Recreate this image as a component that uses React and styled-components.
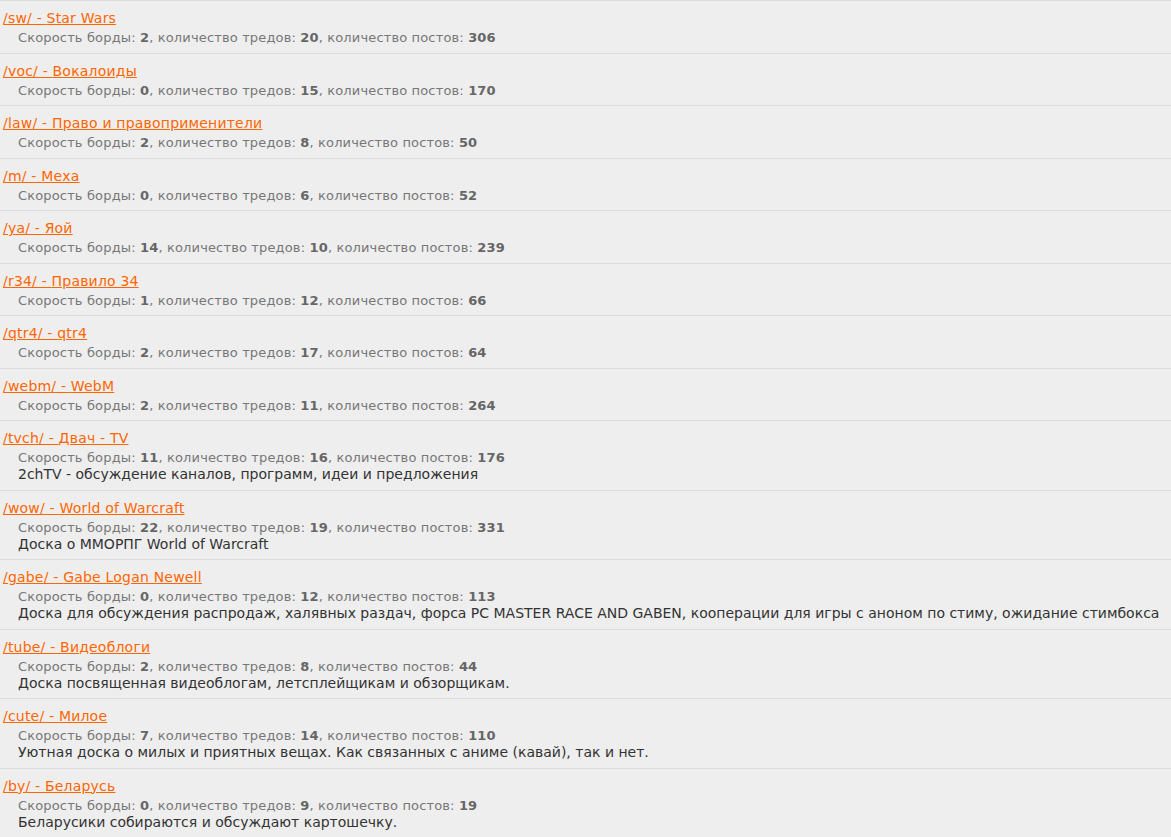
import styled, { createGlobalStyle } from "styled-components";

const GlobalStyle = createGlobalStyle`
  body {
    margin: 0;
    background: #eeeeee;
    font-family: "DejaVu Sans", Verdana, sans-serif;
  }
`;

const boards = [
  { id: "sw", name: "Star Wars", speed: 2, threads: 20, posts: 306 },
  { id: "voc", name: "Вокалоиды", speed: 0, threads: 15, posts: 170 },
  { id: "law", name: "Право и правоприменители", speed: 2, threads: 8, posts: 50 },
  { id: "m", name: "Меха", speed: 0, threads: 6, posts: 52 },
  { id: "ya", name: "Яой", speed: 14, threads: 10, posts: 239 },
  { id: "r34", name: "Правило 34", speed: 1, threads: 12, posts: 66 },
  { id: "qtr4", name: "qtr4", speed: 2, threads: 17, posts: 64 },
  { id: "webm", name: "WebM", speed: 2, threads: 11, posts: 264 },
  {
    id: "tvch",
    name: "Двач - TV",
    speed: 11,
    threads: 16,
    posts: 176,
    info: "2chTV - обсуждение каналов, программ, идеи и предложения",
  },
  {
    id: "wow",
    name: "World of Warcraft",
    speed: 22,
    threads: 19,
    posts: 331,
    info: "Доска о ММОРПГ World of Warcraft",
  },
  {
    id: "gabe",
    name: "Gabe Logan Newell",
    speed: 0,
    threads: 12,
    posts: 113,
    info: "Доска для обсуждения распродаж, халявных раздач, форса PC MASTER RACE AND GABEN, кооперации для игры с аноном по стиму, ожидание стимбокса",
  },
  {
    id: "tube",
    name: "Видеоблоги",
    speed: 2,
    threads: 8,
    posts: 44,
    info: "Доска посвященная видеоблогам, летсплейщикам и обзорщикам.",
  },
  {
    id: "cute",
    name: "Милое",
    speed: 7,
    threads: 14,
    posts: 110,
    info: "Уютная доска о милых и приятных вещах. Как связанных с аниме (кавай), так и нет.",
  },
  {
    id: "by",
    name: "Беларусь",
    speed: 0,
    threads: 9,
    posts: 19,
    info: "Беларусики собираются и обсуждают картошечку.",
  },
];

const List = styled.div`
  display: flex;
  flex-direction: column;
`;

const Row = styled.div`
  border-top: 1px solid #dcdcdc;
  padding: 9px 0 6.5px 3px;
  display: flex;
  flex-direction: column;
  align-items: flex-start;
`;

const Title = styled.a`
  color: #ff6600;
  font-size: 14px;
  line-height: 17px;
  text-decoration: underline;
  letter-spacing: 0.2px;
`;

const Stats = styled.div`
  margin: 3px 0 0 15px;
  color: #777777;
  font-size: 13px;
  line-height: 16px;
  letter-spacing: 0.15px;
`;

const Num = styled.b`
  color: #666666;
`;

const Info = styled.div`
  margin-left: 15px;
  color: #333333;
  font-size: 14px;
  line-height: 17px;
`;

const BoardRow = ({ board }) => (
  <Row>
    <Title href={`/${board.id}/`}>
      /{board.id}/ - {board.name}
    </Title>
    <Stats>
      Скорость борды: <Num>{board.speed}</Num>, количество тредов:{" "}
      <Num>{board.threads}</Num>, количество постов: <Num>{board.posts}</Num>
    </Stats>
    {board.info && <Info>{board.info}</Info>}
  </Row>
);

export default function App() {
  return (
    <>
      <GlobalStyle />
      <List>
        {boards.map((b) => (
          <BoardRow key={b.id} board={b} />
        ))}
      </List>
    </>
  );
}
